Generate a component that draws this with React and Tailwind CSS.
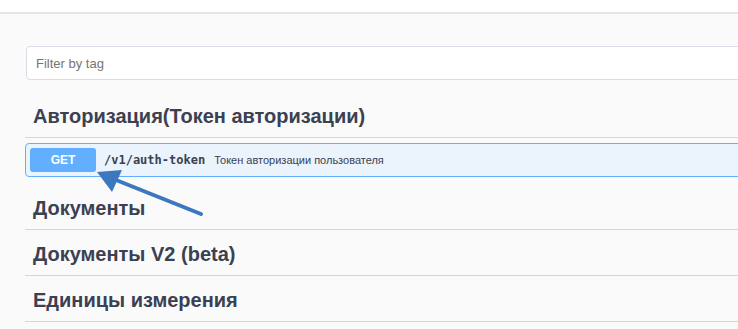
const sections = ["Документы", "Документы V2 (beta)", "Единицы измерения"];

const Heading = ({ children }) => (
  <h4 className="border-b border-[#d5d6da] pl-[8px] pt-[10px] pb-[7px] text-[20px] leading-[28px] font-bold text-[#3b4151]">
    {children}
  </h4>
);

const App = () => {
  return (
    <div
      className="relative h-[329px] w-[738px] overflow-hidden bg-[#fafafa]"
      style={{ fontFamily: '"Liberation Sans", Arial, sans-serif' }}
    >
      <div className="h-[14px] border-b-2 border-[#e6e6e6] bg-white" />

      <div className="w-[760px] pl-[25px] pt-[32px]">
        <input
          type="text"
          placeholder="Filter by tag"
          className="ml-[1px] block h-[34px] w-[740px] rounded-[4px] border border-[#d8dde7] bg-white px-[9px] text-[13px] text-[#3b4151] placeholder:text-[#757575] outline-none"
        />

        <div className="mt-[12px]">
          <Heading>Авторизация(Токен авторизации)</Heading>

          <div className="mt-[5px] flex items-center rounded-[4px] border border-[#61affe] bg-[#ebf3fc] p-[4px]">
            <span className="flex h-[24px] w-[66px] items-center justify-center rounded-[3px] bg-[#61affe] text-[12px] font-bold text-white">
              GET
            </span>
            <span
              className="ml-[8px] text-[12px] font-bold text-[#3b4151]"
              style={{ fontFamily: '"DejaVu Sans Mono", monospace' }}
            >
              /v1/auth-token
            </span>
            <span className="ml-[9px] text-[11px] text-[#3b4151]">
              Токен авторизации пользователя
            </span>
          </div>
        </div>

        <div className="mt-[7px]">
          {sections.map((s) => (
            <Heading key={s}>{s}</Heading>
          ))}
        </div>
      </div>

      <svg
        className="pointer-events-none absolute left-0 top-0"
        width="738"
        height="329"
        viewBox="0 0 738 329"
      >
        <line
          x1="201"
          y1="214"
          x2="116"
          y2="180"
          stroke="#3b78c0"
          strokeWidth="4"
          strokeLinecap="round"
        />
        <polygon points="97,172 122,170 112,192" fill="#3b78c0" />
      </svg>
    </div>
  );
};

export default App;
